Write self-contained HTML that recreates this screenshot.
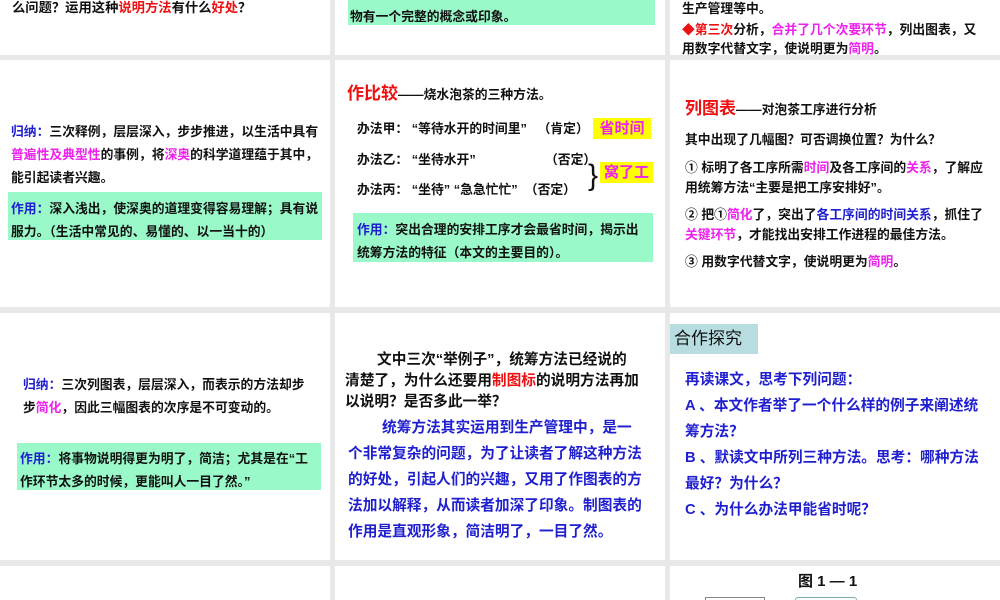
<!DOCTYPE html>
<html><head><meta charset="utf-8"><style>
body{margin:0;width:1000px;height:600px;background:#e8e8e8;position:relative;overflow:hidden;font-family:"Liberation Sans","Noto Sans CJK SC",sans-serif;font-weight:bold;color:#111}
.s{position:absolute;background:#fff;overflow:hidden}
.t{position:absolute;white-space:nowrap;font-size:12.8px;line-height:16px}
.g{position:absolute;background:#99f9c9}
.r{color:#ee1111}.m{color:#ee22ee}.b{color:#1f1fd0}
.y{position:absolute;background:#ffff00;color:#ee22ee;font-size:15px;text-align:center;line-height:21px}
</style></head><body>
<!-- row1 -->
<div class="s" style="left:0;top:0;width:330px;height:55px">
<div class="t" style="left:12px;top:0;font-size:13.3px">么问题？运用这种<span class="r">说明方法</span>有什么<span class="r">好处</span>？</div></div>
<div class="s" style="left:335px;top:0;width:330px;height:55px">
<div class="g" style="left:13px;top:0;width:307px;height:25px"></div>
<div class="t" style="left:15px;top:9px">物有一个完整的概念或印象。</div></div>
<div class="s" style="left:670px;top:0;width:330px;height:55px">
<div class="t" style="left:12px;top:1px">生产管理等中。</div>
<div class="t" style="left:12px;top:22px"><span class="r">◆第三次</span>分析，<span class="m">合并了几个次要环节</span>，列出图表，又</div>
<div class="t" style="left:12px;top:41px">用数字代替文字，使说明更为<span class="m">简明</span>。</div></div>
<!-- row2 -->
<div class="s" style="left:0;top:60px;width:330px;height:247px">
<div class="t" style="left:11px;top:64px"><span class="b">归纳：</span>三次释例，层层深入，步步推进，以生活中具有</div>
<div class="t" style="left:11px;top:87px"><span class="m">普遍性及典型性</span>的事例，将<span class="m">深奥</span>的科学道理蕴于其中，</div>
<div class="t" style="left:11px;top:110px">能引起读者兴趣。</div>
<div class="g" style="left:8px;top:132px;width:314px;height:48px"></div>
<div class="t" style="left:11px;top:141px"><span class="b">作用：</span>深入浅出，使深奥的道理变得容易理解；具有说</div>
<div class="t" style="left:11px;top:164px">服力。（生活中常见的、易懂的、以一当十的）</div></div>
<div class="s" style="left:335px;top:60px;width:330px;height:247px">
<div class="t" style="left:12px;top:26px"><span class="r" style="font-size:17px">作比较</span>——烧水泡茶的三种方法。</div>
<div class="t" style="left:22px;top:61px">办法甲：&nbsp;“等待水开的时间里”&nbsp;&nbsp;&nbsp;（肯定）</div>
<div class="y" style="left:258px;top:58px;width:58px">省时间</div>
<div class="t" style="left:22px;top:92px">办法乙：&nbsp;“坐待水开”</div>
<div class="t" style="left:210px;top:92px">（否定）</div>
<div class="t" style="left:22px;top:122px">办法丙：&nbsp;“坐待”&nbsp;“急急忙忙”&nbsp;&nbsp;（否定）</div>
<div class="t" style="left:253px;top:96px;font-size:30px;line-height:40px;font-weight:normal">}</div>
<div class="y" style="left:265px;top:102px;width:53px">窝了工</div>
<div class="g" style="left:18px;top:153px;width:300px;height:49px"></div>
<div class="t" style="left:22px;top:162px"><span class="b">作用：</span>突出合理的安排工序才会最省时间，揭示出</div>
<div class="t" style="left:22px;top:185px">统筹方法的特征（本文的主要目的）。</div></div>
<div class="s" style="left:670px;top:60px;width:330px;height:247px">
<div class="t" style="left:15px;top:41px"><span class="r" style="font-size:17px">列图表</span>——对泡茶工序进行分析</div>
<div class="t" style="left:15px;top:72px">其中出现了几幅图？可否调换位置？为什么？</div>
<div class="t" style="left:15px;top:100px">① 标明了各工序所需<span class="m">时间</span>及各工序间的<span class="m">关系</span>，了解应</div>
<div class="t" style="left:15px;top:120px">用统筹方法“主要是把工序安排好”。</div>
<div class="t" style="left:15px;top:147px">② 把①<span class="m">简化</span>了，突出了<span class="b">各工序间的时间关系</span>，抓住了</div>
<div class="t" style="left:15px;top:167px"><span class="m">关键环节</span>，才能找出安排工作进程的最佳方法。</div>
<div class="t" style="left:15px;top:194px">③ 用数字代替文字，使说明更为<span class="m">简明</span>。</div></div>
<!-- row3 -->
<div class="s" style="left:0;top:313px;width:330px;height:247px">
<div class="t" style="left:23px;top:64px"><span class="b">归纳：</span>三次列图表，层层深入，而表示的方法却步</div>
<div class="t" style="left:23px;top:87px">步<span class="m">简化</span>，因此三幅图表的次序是不可变动的。</div>
<div class="g" style="left:17px;top:130px;width:304px;height:47px"></div>
<div class="t" style="left:20px;top:138px"><span class="b">作用：</span>将事物说明得更为明了，简洁；尤其是在“工</div>
<div class="t" style="left:20px;top:161px">作环节太多的时候，更能叫人一目了然。”</div></div>
<div class="s" style="left:335px;top:313px;width:330px;height:247px">
<div class="t" style="font-size:14.7px;left:42px;top:39px">文中三次“举例子”，统筹方法已经说的</div>
<div class="t" style="font-size:14.7px;left:10px;top:60px">清楚了，为什么还要用<span class="r">制图标</span>的说明方法再加</div>
<div class="t" style="font-size:14.7px;left:10px;top:81px">以说明？是否多此一举？</div>
<div class="t b" style="font-size:14.7px;left:47px;top:107px">统筹方法其实运用到生产管理中，是一</div>
<div class="t b" style="font-size:14.7px;left:13px;top:133px">个非常复杂的问题，为了让读者了解这种方法</div>
<div class="t b" style="font-size:14.7px;left:13px;top:159px">的好处，引起人们的兴趣，又用了作图表的方</div>
<div class="t b" style="font-size:14.7px;left:13px;top:185px">法加以解释，从而读者加深了印象。制图表的</div>
<div class="t b" style="font-size:14.7px;left:13px;top:211px">作用是直观形象，简洁明了，一目了然。</div></div>
<div class="s" style="left:670px;top:313px;width:330px;height:247px">
<div style="position:absolute;left:0;top:11px;width:88px;height:30px;background:#b7dde1"></div>
<div class="t" style="left:4px;top:14px;font-size:17px;line-height:24px;font-weight:normal">合作探究</div>
<div class="t b" style="font-size:14.7px;left:15px;top:59px">再读课文，思考下列问题：</div>
<div class="t b" style="font-size:14.7px;left:15px;top:85px">A 、本文作者举了一个什么样的例子来阐述统</div>
<div class="t b" style="font-size:14.7px;left:15px;top:111px">筹方法？</div>
<div class="t b" style="font-size:14.7px;left:15px;top:137px">B 、默读文中所列三种方法。思考：哪种方法</div>
<div class="t b" style="font-size:14.7px;left:15px;top:163px">最好？为什么？</div>
<div class="t b" style="font-size:14.7px;left:15px;top:189px">C 、为什么办法甲能省时呢？</div></div>
<!-- row4 -->
<div class="s" style="left:0;top:566px;width:330px;height:34px"></div>
<div class="s" style="left:335px;top:566px;width:330px;height:34px"></div>
<div class="s" style="left:670px;top:566px;width:330px;height:34px">
<div class="t" style="left:128px;top:7px;font-size:15px;line-height:18px">图 1 — 1</div>
<div style="position:absolute;left:35px;top:31px;width:58px;height:4px;border:1px solid #888"></div>
<div style="position:absolute;left:125px;top:31px;width:60px;height:4px;border:1px solid #7aa;border-radius:4px"></div></div>
</body></html>
